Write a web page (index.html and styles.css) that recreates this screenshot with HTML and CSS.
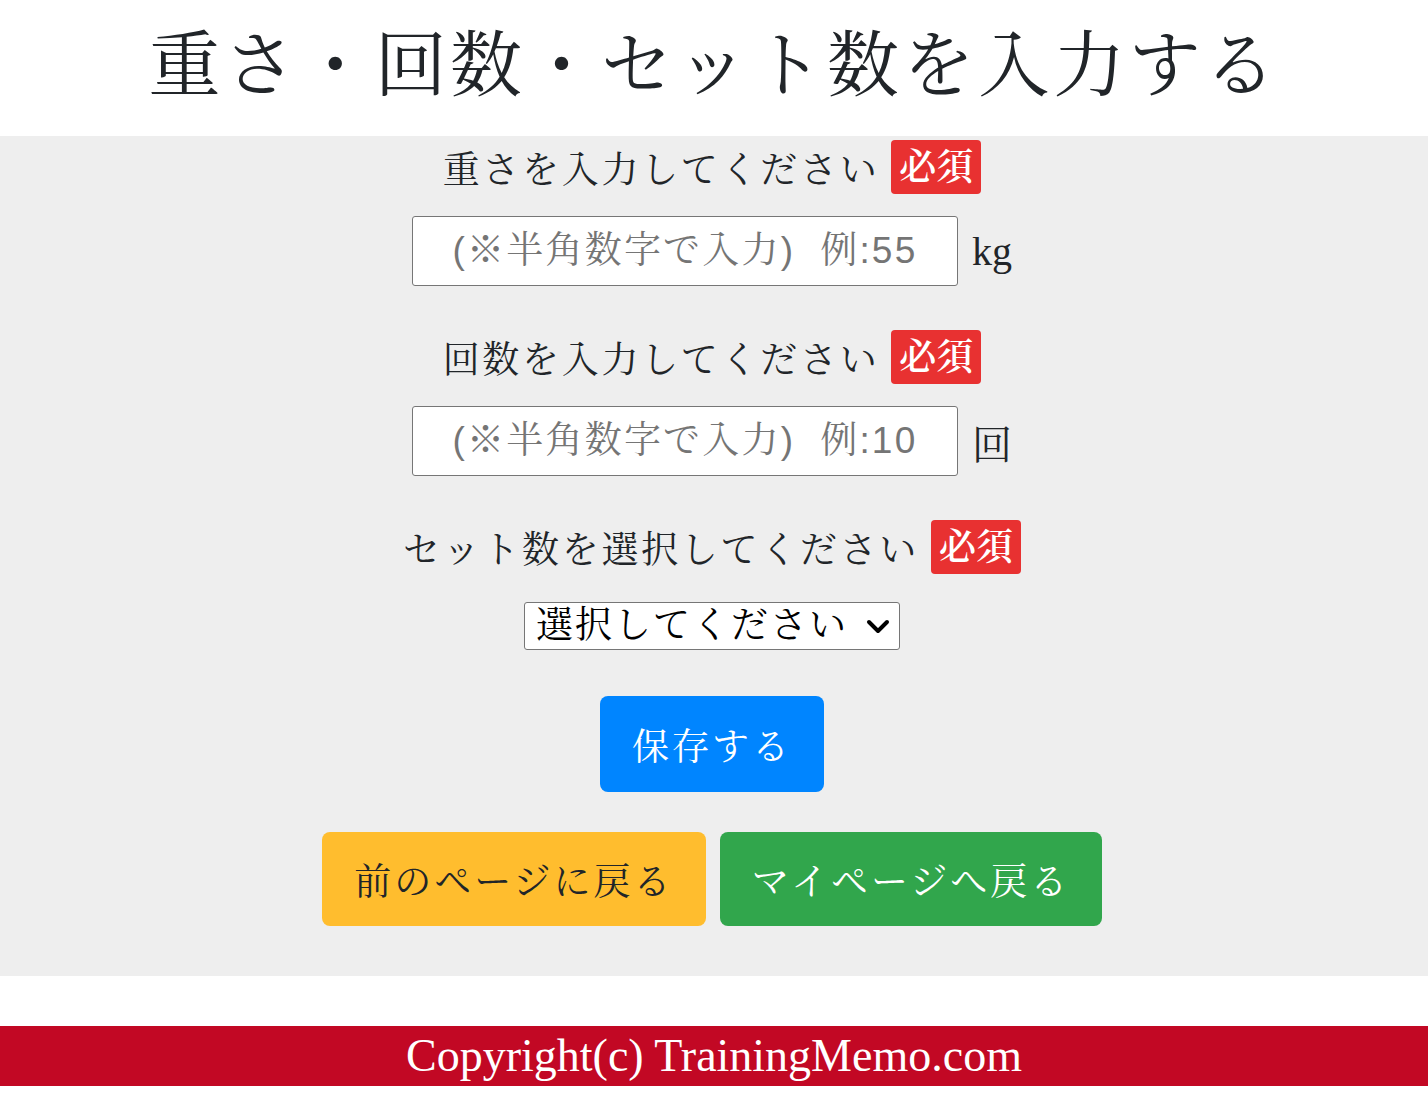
FILE: index.html
```html
<!DOCTYPE html>
<html lang="ja">
<head>
<meta charset="utf-8">
<title>重さ・回数・セット数を入力する</title>
<link rel="stylesheet" href="styles.css">
</head>
<body>
<header class="page-header">
  <h1 class="page-title">重さ・回数・セット数を入力する</h1>
</header>
<main class="form-area">
  <div class="field-label">
    <span class="label-text">重さを入力してください</span>
    <span class="badge">必須</span>
  </div>
  <div class="input-row">
    <input class="num-input" type="text" placeholder="(※半角数字で入力)  例:55">
    <span class="unit">kg</span>
  </div>

  <div class="field-label gap-top">
    <span class="label-text">回数を入力してください</span>
    <span class="badge">必須</span>
  </div>
  <div class="input-row">
    <input class="num-input" type="text" placeholder="(※半角数字で入力)  例:10">
    <span class="unit">回</span>
  </div>

  <div class="field-label gap-top">
    <span class="label-text">セット数を選択してください</span>
    <span class="badge">必須</span>
  </div>
  <div class="select-wrap">
    <select class="set-select">
      <option>選択してください</option>
      <option>1</option>
      <option>2</option>
      <option>3</option>
    </select>
    <svg class="chevron" width="24" height="16" viewBox="0 0 24 16"><path d="M3 3 L12 12 L21 3" fill="none" stroke="#000" stroke-width="4" stroke-linecap="round" stroke-linejoin="round"/></svg>
  </div>

  <button class="btn btn-save" type="button">保存する</button>

  <div class="nav-buttons">
    <button class="btn btn-back" type="button">前のページに戻る</button>
    <button class="btn btn-mypage" type="button">マイページへ戻る</button>
  </div>
</main>
<footer class="page-footer">Copyright(c) TrainingMemo.com</footer>
</body>
</html>
```
FILE: styles.css
```css
* { box-sizing: border-box; }
html, body { margin: 0; padding: 0; background: #fff; }
body {
  font-family: "Liberation Serif", "Noto Serif CJK JP", "Noto Sans CJK JP", serif;
  color: #212529;
}
.page-header {
  height: 136px;
  display: flex;
  align-items: center;
  justify-content: center;
}
.page-title {
  margin: 0;
  font-size: 72px;
  font-weight: normal;
  letter-spacing: 3.4px;
  line-height: 1;
  padding-bottom: 4px;
}
.form-area {
  background: #eeeeee;
  display: flex;
  flex-direction: column;
  align-items: center;
  padding: 4px 4px 50px 0;
}
.field-label {
  display: flex;
  align-items: center;
  gap: 12px;
  height: 54px;
}
.field-label.gap-top { margin-top: 44px; }
.label-text {
  font-size: 37px;
  letter-spacing: 2.7px;
}
.badge {
  background: #e83131;
  color: #fff;
  font-size: 37px;
  font-weight: 600;
  height: 54px;
  line-height: 56px;
  padding: 0 8px;
  border-radius: 4px;
}
.input-row {
  display: flex;
  align-items: center;
  gap: 14px;
  margin-top: 22px;
}
.num-input {
  width: 546px;
  height: 70px;
  border: 1px solid #767676;
  border-radius: 3px;
  background: #fff;
  font-family: "Liberation Sans", "Noto Serif CJK JP", sans-serif;
  font-size: 37px;
  letter-spacing: 2.2px;
  text-align: center;
  color: #212529;
}
.num-input::placeholder { color: #757575; }
.unit {
  font-size: 40px;
}
.select-wrap {
  position: relative;
  margin-top: 28px;
}
.set-select {
  appearance: none;
  -webkit-appearance: none;
  width: 376px;
  height: 48px;
  border: 1px solid #767676;
  border-radius: 3px;
  background: #fff;
  font-family: inherit;
  font-size: 37px;
  letter-spacing: 2px;
  color: #000;
  padding: 0 40px 0 11px;
  line-height: 46px;
}
.chevron {
  position: absolute;
  right: 10px;
  top: 17px;
  pointer-events: none;
}
.btn {
  border: none;
  font-family: inherit;
  font-size: 37px;
  letter-spacing: 3px;
  cursor: pointer;
}
.btn-save {
  margin-top: 46px;
  width: 224px;
  height: 96px;
  background: #0085ff;
  color: #fff;
  border-radius: 8px;
}
.nav-buttons {
  display: flex;
  gap: 14px;
  margin-top: 40px;
}
.btn-back, .btn-mypage {
  height: 94px;
  border-radius: 8px;
}
.btn-back {
  width: 384px;
  background: #ffbd2e;
  color: #212529;
}
.btn-mypage {
  width: 382px;
  background: #31a64c;
  color: #fff;
}
.page-footer {
  margin-top: 50px;
  height: 60px;
  background: #c20824;
  color: #fff;
  font-size: 46px;
  line-height: 60px;
  text-align: center;
}
```
